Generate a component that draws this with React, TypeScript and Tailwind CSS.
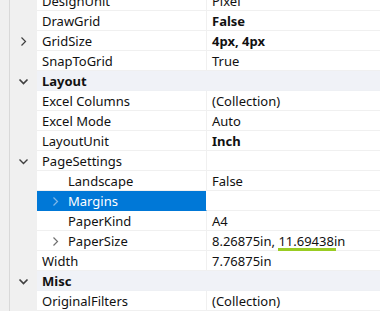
import React from "react";

type Row = {
  name: string;
  value?: string;
  bold?: boolean;
  category?: boolean;
  expand?: "right" | "down";
  indent?: boolean;
  selected?: boolean;
  underline?: boolean;
};

const rows: Row[] = [
  { name: "DesignUnit", value: "Pixel" },
  { name: "DrawGrid", value: "False", bold: true },
  { name: "GridSize", value: "4px, 4px", bold: true, expand: "right" },
  { name: "SnapToGrid", value: "True" },
  { name: "Layout", category: true, expand: "down" },
  { name: "Excel Columns", value: "(Collection)" },
  { name: "Excel Mode", value: "Auto" },
  { name: "LayoutUnit", value: "Inch", bold: true },
  { name: "PageSettings", value: "", expand: "down" },
  { name: "Landscape", value: "False", indent: true },
  { name: "Margins", value: "", indent: true, expand: "right", selected: true },
  { name: "PaperKind", value: "A4", indent: true },
  { name: "PaperSize", value: "8.26875in, 11.69438in", indent: true, expand: "right", underline: true },
  { name: "Width", value: "7.76875in" },
  { name: "Misc", category: true, expand: "down" },
  { name: "OriginalFilters", value: "(Collection)" },
];

function Chevron({ dir, color, heavy }: { dir: "right" | "down"; color: string; heavy?: boolean }) {
  return (
    <svg width="11" height="11" viewBox="0 0 11 11" className="shrink-0">
      {dir === "right" ? (
        <path d="M3.5 1.5 L7.5 5.5 L3.5 9.5" fill="none" stroke={color} strokeWidth="1.2" />
      ) : (
        <path d="M1.5 3.5 L5.5 7.5 L9.5 3.5" fill="none" stroke={color} strokeWidth={heavy ? 1.7 : 1.4} />
      )}
    </svg>
  );
}

function PropRow({ r }: { r: Row }) {
  const top = !r.indent && r.expand;
  return (
    <div className="flex h-[20px]">
      <div className="w-[10px] shrink-0 border-r border-[#d9d9d9] bg-[#f0f0f0]" />
      <div className="flex w-[27px] shrink-0 items-center justify-center bg-[#f0f0f0]">
        {top && <Chevron dir={r.expand!} color="#404040" heavy={r.category} />}
      </div>
      {r.category ? (
        <div className="flex flex-1 items-center border-b border-[#eef0f4] bg-[#f0f2f7] pl-[5px] font-bold text-[#111]">
          <span className="mt-[2px]">{r.name}</span>
        </div>
      ) : (
        <>
          <div
            className={`flex w-[170px] shrink-0 items-center border-b border-r ${
              r.selected ? "bg-[#0078d7] text-white border-b-[#0078d7]" : "bg-white text-[#111] border-[#f0f0f0]"
            }`}
          >
            {r.indent ? (
              <>
                <div className="mt-[1px] flex w-[27px] shrink-0 items-center justify-end pr-[3px]">
                  {r.expand && <Chevron dir="right" color={r.selected ? "#80b8e8" : "#707070"} />}
                </div>
                <span className="mt-[2px] pl-[4px]">{r.name}</span>
              </>
            ) : (
              <span className="mt-[2px] pl-[5px]">{r.name}</span>
            )}
          </div>
          <div className="flex flex-1 items-center border-b border-[#f0f0f0] bg-white pl-[5px] text-[#111]">
            {r.underline ? (
              <span className="mt-[2px]">
                8.26875in,{" "}
                <span className="relative">
                  11.69438in
                  <span className="absolute left-0 right-[9px] top-[16px] h-[3px] bg-[#99cc22]" />
                </span>
              </span>
            ) : (
              <span className={`mt-[2px] ${r.bold ? "font-bold" : ""}`}>{r.value}</span>
            )}
          </div>
        </>
      )}
    </div>
  );
}

export default function App() {
  return (
    <div
      className="h-[311px] w-[380px] overflow-hidden bg-white text-[13px] leading-none"
      style={{ fontFamily: '"Noto Sans", "Segoe UI", sans-serif' }}
    >
      <div className="-mt-[9px]">
        {rows.map((r) => (
          <PropRow key={r.name} r={r} />
        ))}
      </div>
    </div>
  );
}
